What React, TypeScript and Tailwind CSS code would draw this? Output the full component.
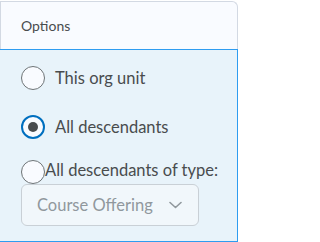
export default function App() {
  return (
    <div className="w-[240px] h-[242px] bg-white overflow-hidden" style={{ fontFamily: 'Lato, "Open Sans", sans-serif' }}>
      <div className="w-[238px] mt-px">
        <div className="h-[48px] bg-[#f9fbff] border-l border-r border-t border-[#d3d9e3] rounded-tr-[6px] flex items-center pl-[20px] text-[14px] text-[#494c4e]">
          Options
        </div>
        <div className="h-[193px] bg-[#e8f3fa] border-t border-b border-r border-[#2e9cf0] pt-[16px] pl-[21px]">
          <label className="flex items-center h-[24px] gap-[10px]">
            <span className="w-[24px] h-[24px] rounded-full border border-[#6e7477] bg-[#f9fbff]" />
            <span className="text-[16.5px] text-[#494c4e]">This org unit</span>
          </label>
          <label className="flex items-center h-[24px] gap-[10px] mt-[25px]">
            <span className="w-[24px] h-[24px] rounded-full border-2 border-[#006fbf] bg-[#f9fbff] flex items-center justify-center">
              <span className="w-[10px] h-[10px] rounded-full bg-[#494c4e]" />
            </span>
            <span className="text-[16.5px] text-[#494c4e]">All descendants</span>
          </label>
          <label className="flex items-center h-[23px] mt-[21px]">
            <span className="w-[24px] h-[24px] rounded-full border border-[#6e7477] bg-[#f9fbff]" />
            <span className="text-[16.5px] text-[#494c4e] -mt-[2px]">All descendants of type:</span>
          </label>
          <div className="mt-px w-[178px] h-[42px] rounded-[6px] border border-[#c9d0d6] bg-[#f1f7fb] flex items-center pl-[15px] pr-[16px] justify-between">
            <span className="text-[16.5px] text-[#90989d]">Course Offering</span>
            <svg width="13" height="8" viewBox="0 0 13 8" fill="none">
              <path d="M1 1.5l5.5 5 5.5-5" stroke="#90989d" strokeWidth="1.6" strokeLinecap="round" strokeLinejoin="round" />
            </svg>
          </div>
        </div>
      </div>
    </div>
  );
}
